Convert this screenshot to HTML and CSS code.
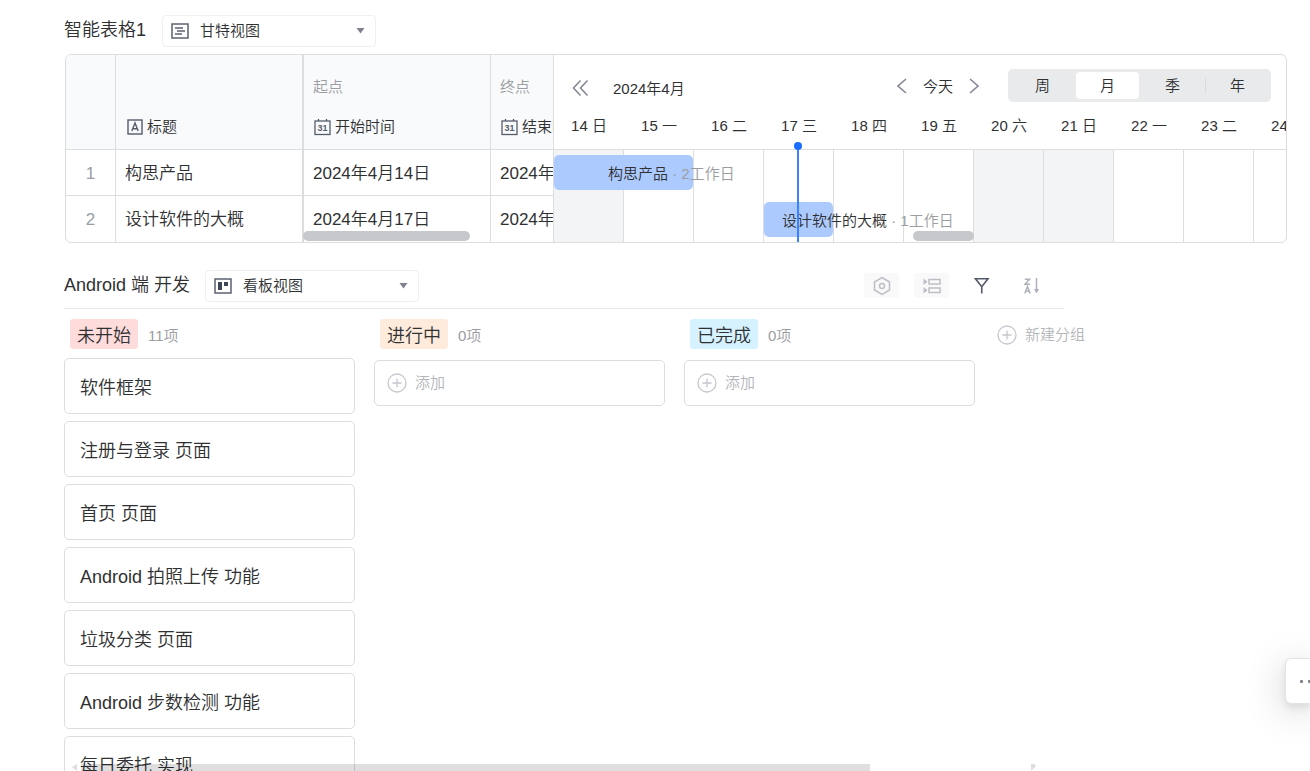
FILE: index.html
```html
<!DOCTYPE html>
<html lang="zh-CN">
<head>
<meta charset="utf-8">
<title>智能表格</title>
<link rel="stylesheet" href="styles.css">
</head>
<body>
<main class="page">
  <section class="sheet">
    <header class="sheet-head">
      <h2 class="title">智能表格1</h2>
      <div class="picker">
        <svg class="picker-icon" width="18" height="16" viewBox="0 0 18 16" fill="none" stroke="#5c6270" stroke-width="1.5"><rect x="1" y="1" width="16" height="14"/><path d="M4 5h8M6 8h8M4 11h7"/></svg>
        <select class="picker-select" aria-label="甘特视图选择"><option>甘特视图</option></select>
        <svg class="picker-caret" width="9" height="6" viewBox="0 0 9 6"><path d="M.5 0h8L4.500 5.500z" fill="#7d828c"/></svg>
      </div>
    </header>

    <div class="gantt">
      <div class="grid-pane">
        <table class="grid">
          <colgroup><col class="c-num"><col class="c-name"><col class="c-start"><col class="c-end"></colgroup>
          <thead>
            <tr>
              <th></th>
              <th><span class="field"><svg width="16" height="16" viewBox="0 0 16 16" fill="none" stroke="#555c6b" stroke-width="1.400"><rect x="1" y="1" width="14" height="14"/><path d="M4.800 12 8 4l3.200 8M5.800 9.700h4.400"/></svg>标题</span></th>
              <th><span class="role">起点</span><span class="field"><svg width="17" height="17" viewBox="0 0 17 17" fill="none" stroke="#555c6b" stroke-width="1.300"><rect x="1" y="2" width="15" height="13.500"/><path d="M4.500 0v2M12.500 0v2"/><text class="cal-num" x="8.500" y="12">31</text></svg>开始时间</span></th>
              <th><span class="role">终点</span><span class="field"><svg width="17" height="17" viewBox="0 0 17 17" fill="none" stroke="#555c6b" stroke-width="1.300"><rect x="1" y="2" width="15" height="13.500"/><path d="M4.500 0v2M12.500 0v2"/><text class="cal-num" x="8.500" y="12">31</text></svg>结束时间</span></th>
            </tr>
          </thead>
          <tbody>
            <tr><td class="num">1</td><td>构思产品</td><td>2024年4月14日</td><td>2024年4月15日</td></tr>
            <tr><td class="num">2</td><td>设计软件的大概</td><td>2024年4月17日</td><td>2024年4月17日</td></tr>
          </tbody>
        </table>
        <div class="thumb thumb-grid"></div>
      </div>

      <div class="time-pane">
        <div class="time-head">
          <div class="time-bar">
            <button class="icon-btn collapse" aria-label="收起"><svg width="18" height="18" viewBox="0 0 18 18" fill="none" stroke="#858995" stroke-width="1.600"><path d="M9.500 1.500 2.500 9l7 7.500M16.500 1.500 9.500 9l7 7.500"/></svg></button>
            <span class="month">2024年4月</span>
            <div class="nav">
              <button class="icon-btn" aria-label="上一页"><svg width="10" height="16" viewBox="0 0 10 16" fill="none" stroke="#858995" stroke-width="1.600"><path d="M9 1 1 8l8 7"/></svg></button>
              <button class="today-btn">今天</button>
              <button class="icon-btn" aria-label="下一页"><svg width="10" height="16" viewBox="0 0 10 16" fill="none" stroke="#858995" stroke-width="1.600"><path d="m1 1 8 7-8 7"/></svg></button>
            </div>
            <div class="scale">
              <button>周</button><button class="active">月</button><button>季</button><button class="split">年</button>
            </div>
          </div>
          <div class="days">
            <span>14 日</span><span>15 一</span><span>16 二</span><span>17 三</span><span>18 四</span><span>19 五</span><span>20 六</span><span>21 日</span><span>22 一</span><span>23 二</span><span>24 三</span>
          </div>
        </div>
        <div class="chart">
          <div class="cells"><i class="off"></i><i></i><i></i><i></i><i></i><i></i><i class="off"></i><i class="off"></i><i></i><i></i><i></i></div>
          <div class="task task-1"><span>构思产品<em> · 2工作日</em></span></div>
          <div class="task task-2"><span>设计软件的大概<em> · 1工作日</em></span></div>
          <div class="today"></div>
          <div class="thumb thumb-time"></div>
        </div>
      </div>
    </div>
  </section>

  <section class="kanban">
    <header class="kanban-head">
      <h2 class="title">Android 端 开发</h2>
      <div class="picker">
        <svg class="picker-icon" width="18" height="16" viewBox="0 0 18 16"><rect x="1" y="1" width="16" height="14" fill="none" stroke="#5c6270" stroke-width="1.500"/><path d="M4 4h4v8H4zM10 4h4v4h-4z" fill="#3f4656"/></svg>
        <select class="picker-select" aria-label="看板视图选择"><option>看板视图</option></select>
        <svg class="picker-caret" width="9" height="6" viewBox="0 0 9 6"><path d="M.5 0h8L4.500 5.500z" fill="#7d828c"/></svg>
      </div>
      <div class="tools">
        <button class="tool filled" aria-label="设置"><svg width="18" height="20" viewBox="0 0 18 20" fill="none" stroke="#bcbfc6" stroke-width="1.500"><path d="M9 1.500 16.500 6v8L9 18.500 1.500 14V6z"/><circle cx="9" cy="10" r="2.500"/></svg></button>
        <button class="tool filled" aria-label="分组"><svg width="18" height="16" viewBox="0 0 18 16" fill="none" stroke="#bcbfc6" stroke-width="1.500"><rect x="6" y="1.500" width="11" height="4.500"/><rect x="6" y="10" width="11" height="4.500"/><path d="M.5.500 4.500 3.700.5 7zM.5 9l4 3.200-4 3.300z" fill="#bcbfc6" stroke="none"/></svg></button>
        <button class="tool" aria-label="筛选"><svg width="16" height="17" viewBox="0 0 16 17" fill="none" stroke="#555a68" stroke-width="1.600"><path d="M1.500 1.800h12.500L7.750 9.800zM7.750 9v7.500"/></svg></button>
        <button class="tool" aria-label="排序"><svg width="16" height="16" viewBox="0 0 16 16" fill="none" stroke="#aeb1b9" stroke-width="1.500"><path d="M.8 1.300h4.700L1 6.300h5.200M.8 15.500l2.700-7 2.700 7M1.700 13.200h3.600M12.500 0v14"/><path d="M10 11h5l-2.500 4.500z" fill="#aeb1b9" stroke="none"/></svg></button>
      </div>
    </header>

    <div class="board">
      <div class="lane">
        <div class="lane-head"><span class="tag red">未开始</span><span class="count">11项</span></div>
        <div class="cards">
          <article class="card">软件框架</article>
          <article class="card">注册与登录 页面</article>
          <article class="card">首页 页面</article>
          <article class="card">Android 拍照上传 功能</article>
          <article class="card">垃圾分类 页面</article>
          <article class="card">Android 步数检测 功能</article>
          <article class="card">每日委托 实现</article>
        </div>
      </div>
      <div class="lane">
        <div class="lane-head"><span class="tag orange">进行中</span><span class="count">0项</span></div>
        <button class="add"><svg width="20" height="20" viewBox="0 0 20 20" fill="none" stroke="#c6c8cd" stroke-width="1.300"><circle cx="10" cy="10" r="9"/><path d="M10 5.500v9M5.500 10h9"/></svg>添加</button>
      </div>
      <div class="lane">
        <div class="lane-head"><span class="tag blue">已完成</span><span class="count">0项</span></div>
        <button class="add"><svg width="20" height="20" viewBox="0 0 20 20" fill="none" stroke="#c6c8cd" stroke-width="1.300"><circle cx="10" cy="10" r="9"/><path d="M10 5.500v9M5.500 10h9"/></svg>添加</button>
      </div>
      <div class="lane-new">
        <button class="new-group"><svg width="20" height="20" viewBox="0 0 20 20" fill="none" stroke="#c6c8cd" stroke-width="1.300"><circle cx="10" cy="10" r="9"/><path d="M10 5.500v9M5.500 10h9"/></svg>新建分组</button>
      </div>
    </div>
  </section>
</main>

<div class="hscroll">
  <svg width="5" height="7" viewBox="0 0 5 7"><path d="M5 0v7L0 3z" fill="#dedede"/></svg>
  <div class="hscroll-track"><div class="hscroll-thumb"></div></div>
  <svg width="5" height="7" viewBox="0 0 5 7"><path d="M0 0h3l2 2-5 5z" fill="#dedede"/></svg>
</div>
<button class="more" aria-label="更多"><i></i><i></i></button>
</body>
</html>
```
FILE: styles.css
```css
* { box-sizing: border-box; }

body {
  margin: 0;
  height: 100vh;
  overflow: hidden;
  background: #fff;
  color: #2f3032;
  font: 350 15px/20px "Liberation Sans", "Noto Sans CJK SC", sans-serif;
}

button, select {
  margin: 0;
  padding: 0;
  border: 0;
  background: none;
  color: inherit;
  font: inherit;
}

svg { display: block; flex: none; }

.page { padding: 15px 23px 0 64px; }

.title {
  margin: 0;
  font-size: 18px;
  font-weight: 350;
  line-height: 30px;
  white-space: nowrap;
}

/* view headers */
.sheet-head, .kanban-head {
  display: flex;
  align-items: flex-start;
  gap: 16px;
}
.kanban-head { gap: 15px; }
.picker { position: relative; width: 214px; }
.picker-select {
  display: block;
  width: 100%;
  height: 32px;
  padding-left: 37px;
  border: 1px solid #f0f0f1;
  border-radius: 4px;
  appearance: none;
}
.picker-icon { position: absolute; left: 9px; top: 8px; pointer-events: none; }
.picker-caret { position: absolute; right: 11px; top: 13px; pointer-events: none; }

/* gantt */
.gantt {
  display: flex;
  margin: 7px 0 0 1px;
  border: 1px solid #dcdddf;
  border-radius: 6px;
  overflow: hidden;
}
.grid-pane {
  position: relative;
  flex: none;
  width: 488px;
  overflow: hidden;
  border-right: 1px solid #dcdddf;
}
.grid {
  width: 613px;
  table-layout: fixed;
  border-collapse: separate;
  border-spacing: 0;
}
.c-num { width: 50px; }
.c-name { width: 188px; }
.c-start { width: 187px; }
.c-end { width: 188px; }
.grid th {
  height: 95px;
  padding: 0 9px 12px;
  border-right: 1px solid #dcdddf;
  border-bottom: 1px solid #dcdddf;
  background: #f9fafc;
  font-weight: 350;
  text-align: left;
  vertical-align: bottom;
}
.grid th:nth-child(2), .grid td:nth-child(2) { border-right: 2px solid #dcdddf; }
.field { display: flex; align-items: center; gap: 4px; padding-left: 1px; }
th:nth-child(2) .field { padding-left: 2px; }
.role { display: block; margin-bottom: 20px; color: #9b9da1; }
.cal-num {
  fill: #555c6b;
  stroke: none;
  font-size: 9px;
  font-weight: 700;
  text-anchor: middle;
}
.grid td {
  height: 46px;
  padding: 2px 9px 0;
  border-right: 1px solid #dcdddf;
  border-bottom: 1px solid #dcdddf;
  font-size: 17px;
  white-space: nowrap;
}
.grid tbody tr:last-child td { border-bottom: 0; }
.grid .num { color: #9b9da1; text-align: center; }
.thumb { position: absolute; height: 10px; border-radius: 5px; background: #c7c8cb; }
.thumb-grid { left: 237px; bottom: 1px; width: 167px; }

.time-pane { flex: 1; min-width: 0; display: flex; flex-direction: column; overflow: hidden; }
.time-head {
  flex: none;
  height: 95px;
  padding-top: 14px;
  border-bottom: 1px solid #dcdddf;
}
.time-bar { display: flex; align-items: center; padding: 0 15px 0 17px; }
.icon-btn { display: flex; align-items: center; }
.collapse { padding-top: 4px; }
.month { margin-left: 24px; padding-top: 6px; }
.nav { display: flex; align-items: center; gap: 16px; margin: 0 29px 0 auto; }
.today-btn { padding-top: 2px; }
.scale {
  display: grid;
  grid-template-columns: repeat(4, 1fr);
  width: 263px;
  height: 33px;
  padding: 3px 0 3px 3px;
  border-radius: 5px;
  background: #e9eaec;
}
.scale button { position: relative; margin-right: 2px; border-radius: 4px; }
.scale .active { background: #fff; }
.scale .split::before {
  content: "";
  position: absolute;
  left: -1px;
  top: 6px;
  height: 15px;
  border-left: 1px solid #d9dadd;
}
.days { display: flex; margin-top: 14px; }
.days span { flex: none; width: 70px; text-align: center; }

.chart { position: relative; flex: 1; }
.cells { display: flex; height: 100%; }
.cells i { flex: none; width: 70px; border-right: 1px solid #dcdddf; }
.cells .off { background: #f3f4f6; }
.task {
  position: absolute;
  height: 35px;
  border-radius: 5px;
  background: #adcaff;
  line-height: 38px;
  white-space: nowrap;
}
.task em { color: #9b9da1; font-style: normal; }
.task-1 { left: 0; top: 5px; width: 139px; padding-left: 54px; }
.task-2 { left: 210px; top: 52px; width: 69px; padding-left: 18px; }
.today {
  position: absolute;
  left: 243px;
  top: 0;
  bottom: 0;
  width: 2px;
  background: #3b82ff;
}
.today::before {
  content: "";
  position: absolute;
  left: -3px;
  top: -8px;
  width: 8px;
  height: 8px;
  border-radius: 50%;
  background: #1a6dff;
}
.thumb-time { left: 359px; bottom: 1px; width: 61px; }

/* kanban */
.kanban { margin-top: 27px; }
.kanban-head {
  margin-right: 223px;
  padding: 0 15px 6px 0;
  border-bottom: 1px solid #e6e7e8;
}
.tools { display: flex; gap: 15px; margin: 3px 0 0 auto; }
.tool {
  display: flex;
  align-items: center;
  justify-content: center;
  width: 35px;
  height: 25px;
  border-radius: 3px;
}
.tool.filled { background: #f9f9fa; }

.board { display: flex; align-items: flex-start; gap: 19px; padding-top: 10px; }
.lane { flex: none; width: 291px; }
.lane-head { display: flex; align-items: center; gap: 10px; height: 30px; padding-left: 6px; }
.tag {
  height: 30px;
  padding: 2px 7px 0;
  border-radius: 3px;
  font-size: 18px;
  line-height: 30px;
}
.red { background: #ffdcdc; }
.orange { background: #ffebdc; }
.blue { background: #d6f1ff; }
.count { padding-top: 3px; color: #9b9da1; }
.cards { display: flex; flex-direction: column; gap: 7px; margin-top: 9px; }
.card {
  height: 56px;
  padding: 3px 15px 0;
  border: 1px solid #dcdddf;
  border-radius: 5px;
  font-size: 18px;
  line-height: 52px;
}
.add {
  display: flex;
  align-items: center;
  gap: 8px;
  width: 100%;
  height: 46px;
  margin-top: 11px;
  padding-left: 12px;
  border: 1px solid #dcdddf;
  border-radius: 5px;
  color: #b3b5ba;
}
.new-group {
  display: flex;
  align-items: center;
  gap: 8px;
  height: 32px;
  padding-left: 3px;
  color: #b3b5ba;
  white-space: nowrap;
}

/* overlays */
.hscroll {
  position: fixed;
  left: 72px;
  right: 274px;
  bottom: 0;
  display: flex;
  align-items: center;
  height: 7px;
}
.hscroll-track { flex: 1; padding: 0 5px 0 4px; }
.hscroll-thumb { width: 83.5%; height: 7px; background: rgba(0, 0, 0, .125); }
.more {
  position: fixed;
  right: 0;
  bottom: 67px;
  display: flex;
  align-items: center;
  gap: 5px;
  width: 25px;
  height: 46px;
  padding-left: 14px;
  border: 1px solid #e2e3e4;
  border-right: 0;
  border-radius: 6px 0 0 6px;
  background: #fff;
  box-shadow: 0 8px 40px rgba(0, 0, 0, .2), 0 4px 10px rgba(0, 0, 0, .1);
}
.more i { flex: none; width: 3px; height: 3px; border-radius: 1px; background: #7d828c; }
```
